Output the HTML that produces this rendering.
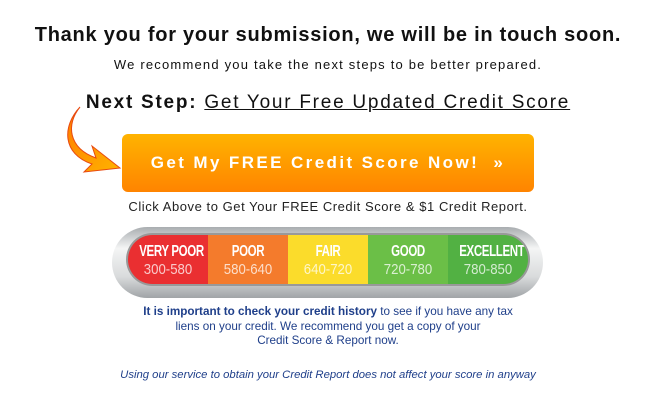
<!DOCTYPE html>
<html><head><meta charset="utf-8"><style>
*{margin:0;padding:0;box-sizing:border-box}
body{width:656px;height:404px;background:#fff;font-family:"Liberation Sans",sans-serif;position:relative;overflow:hidden;color:#111}
.a{position:absolute;left:0;width:656px;text-align:center;white-space:nowrap}
.seg{position:absolute;top:0;height:49px;color:#fff;text-align:center;font-weight:bold;white-space:nowrap}
.seg b{display:block;font-size:16px;margin-top:8px;letter-spacing:-0.5px;transform:scaleX(.72)}
.seg span{display:block;font-size:15px;font-weight:normal;opacity:.75;margin-top:0px;transform:scaleX(.88)}
.blue{color:#1f3f8a}
</style></head><body>
<div class="a" style="top:24px;font-size:20px;font-weight:bold;letter-spacing:0.75px">Thank you for your submission, we will be in touch soon.</div>
<div class="a" style="top:57px;font-size:13px;letter-spacing:1.2px">We recommend you take the next steps to be better prepared.</div>
<div class="a" style="top:92px;font-size:19px;letter-spacing:1.75px"><b>Next Step:</b> <span style="text-decoration:underline">Get Your Free Updated Credit Score</span></div>
<svg style="position:absolute;left:66px;top:106px" width="60" height="68" viewBox="66 106 60 68">
<defs><linearGradient id="g" x1="0" y1="0" x2="1" y2="1"><stop offset="0" stop-color="#ff7a00"/><stop offset="1" stop-color="#ffb400"/></linearGradient></defs>
<path d="M80 107 C66 124 68 148 96 158 L92 146 L120 168 L84 172 L92 164 C62 154 62 126 80 107Z" fill="url(#g)" stroke="#e84a10" stroke-width="1"/>
</svg>
<div style="position:absolute;left:122px;top:134px;width:412px;height:58px;border-radius:6px;background:linear-gradient(#ffb300,#ff8400);color:#fff;font-weight:bold;font-size:17px;letter-spacing:2.4px;text-align:center;line-height:58px">Get My FREE Credit Score Now! &nbsp;»</div>
<div class="a" style="top:199px;font-size:13px;color:#222;letter-spacing:0.55px">Click Above to Get Your FREE Credit Score &amp; $1 Credit Report.</div>
<div style="position:absolute;left:112px;top:227px;width:431px;height:71px;border-radius:36px;background:linear-gradient(#a9adb0,#f4f5f5 30%,#d9dbdc 70%,#a0a4a7)"></div>
<div style="position:absolute;left:126px;top:233px;width:404px;height:53px;border-radius:27px;background:#999"></div>
<div style="position:absolute;left:128px;top:235px;width:400px;height:49px;border-radius:25px;overflow:hidden">
<div class="seg" style="left:0;width:80px;background:#ea2f31"><b>VERY POOR</b><span>300-580</span></div>
<div class="seg" style="left:80px;width:80px;background:#f47b2c"><b>POOR</b><span>580-640</span></div>
<div class="seg" style="left:160px;width:80px;background:#fbdc2b"><b>FAIR</b><span>640-720</span></div>
<div class="seg" style="left:240px;width:80px;background:#6bbf47"><b>GOOD</b><span>720-780</span></div>
<div class="seg" style="left:320px;width:80px;background:#52b143"><b>EXCELLENT</b><span>780-850</span></div>
</div>
<div class="a blue" style="top:305px;font-size:11.7px;line-height:14.5px"><b>It is important to check your credit history</b> to see if you have any tax<br>liens on your credit. We recommend you get a copy of your<br>Credit Score &amp; Report now.</div>
<div class="a blue" style="top:369px;font-size:11.3px;font-style:italic">Using our service to obtain your Credit Report does not affect your score in anyway</div>
</body></html>
